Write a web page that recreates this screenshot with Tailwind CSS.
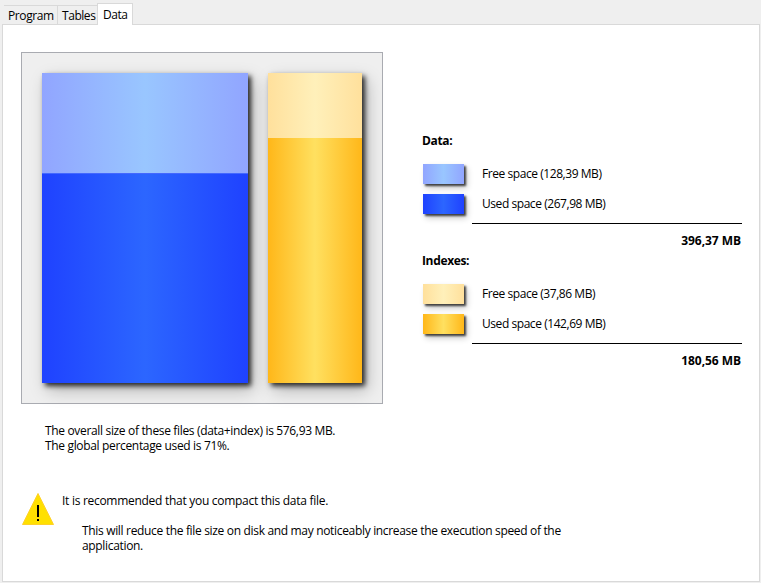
<!DOCTYPE html>
<html lang="en">
<head>
<meta charset="utf-8">
<title>Data</title>
<script src="https://cdn.jsdelivr.net/npm/@tailwindcss/browser@4"></script>
</head>
<body class="h-[583px] w-[761px] overflow-hidden bg-[#efefef] font-['Open_Sans','Noto_Sans',sans-serif] text-[12px] leading-[15px] tracking-[-0.3px] whitespace-nowrap text-black">
<div class="flex h-full flex-col pr-px pb-px pl-[2px]">
  <nav class="relative z-10 -mb-px flex h-[22px] mt-[3px] items-end pl-[2px]">
    <div class="mb-px h-[19px] w-[54px] border-t border-r border-[#d9d9d9] pt-[2px] pl-[4px] tracking-[-0.4px]">Program</div>
    <div class="mb-px h-[19px] w-[39px] border-t border-[#d9d9d9] pt-[2px] pl-[4px] tracking-[-0.45px]">Tables</div>
    <div class="h-[22px] w-[36px] border border-b-0 border-[#d9d9d9] bg-white pt-[3px] pl-[5px] tracking-[-0.5px]">Data</div>
  </nav>
  <main class="h-[558px] w-[758px] border border-[#d9d9d9] bg-white pt-[27px] pl-[18px]">
    <div class="flex">
      <div class="flex h-[352px] w-[362px] gap-[20px] border border-[#a9abb1] bg-[#efefef] pt-[20px] pl-[20px]">
        <div class="h-[310px] w-[206px] shadow-[3px_3px_5px_rgba(0,0,0,0.8),5px_7px_16px_rgba(0,0,0,0.25)]">
          <div class="h-[100px] bg-linear-to-r/srgb from-[#91a5ff] via-[#99c6ff] to-[#91a5ff]"></div>
          <div class="h-[210px] border-t border-[#4468ff] bg-linear-to-r/srgb from-[#1f42ff] via-[#2c66ff] to-[#1f42ff]"></div>
        </div>
        <div class="h-[310px] w-[94px] shadow-[3px_3px_5px_rgba(0,0,0,0.8),5px_7px_16px_rgba(0,0,0,0.25)]">
          <div class="h-[65px] bg-linear-to-r/srgb from-[#ffe09c] via-[#fff0ba] to-[#ffe09c]"></div>
          <div class="h-[245px] bg-linear-to-r/srgb from-[#ffb719] via-[#ffe060] to-[#ffb719]"></div>
        </div>
      </div>
      <div class="ml-[39px] w-[320px] pt-[81px] tracking-[-0.44px]">
        <section class="h-[120px]">
          <h2 class="font-bold tracking-[-0.35px]">Data:</h2>
          <div class="mt-[16px] flex h-[20px] items-center gap-[19px] pl-px">
            <div class="h-[20px] w-[41px] bg-linear-to-r/srgb from-[#91a5ff] via-[#99c6ff] to-[#91a5ff] shadow-[2px_2px_2px_rgba(0,0,0,0.7),3px_4px_6px_rgba(0,0,0,0.22)]"></div><span class="-ml-px pb-px">Free space (128,39 MB)</span>
          </div>
          <div class="mt-[10px] flex h-[20px] items-center gap-[19px] pl-px">
            <div class="h-[20px] w-[41px] bg-linear-to-r/srgb from-[#1f42ff] via-[#2c66ff] to-[#1f42ff] shadow-[2px_2px_2px_rgba(0,0,0,0.7),3px_4px_6px_rgba(0,0,0,0.22)]"></div><span class="-ml-px pb-px">Used space (267,98 MB)</span>
          </div>
          <div class="mt-[9px] ml-[50px] border-t border-black pt-[9px] pr-px text-right font-bold tracking-[-0.05px]">396,37 MB</div>
        </section>
        <section class="h-[120px]">
          <h2 class="font-bold tracking-[-0.35px]">Indexes:</h2>
          <div class="mt-[16px] flex h-[20px] items-center gap-[19px] pl-px">
            <div class="h-[20px] w-[41px] bg-linear-to-r/srgb from-[#ffe09c] via-[#fff0ba] to-[#ffe09c] shadow-[2px_2px_2px_rgba(0,0,0,0.7),3px_4px_6px_rgba(0,0,0,0.22)]"></div><span class="-ml-px pb-px">Free space (37,86 MB)</span>
          </div>
          <div class="mt-[10px] flex h-[20px] items-center gap-[19px] pl-px">
            <div class="h-[20px] w-[41px] bg-linear-to-r/srgb from-[#ffb719] via-[#ffe060] to-[#ffb719] shadow-[2px_2px_2px_rgba(0,0,0,0.7),3px_4px_6px_rgba(0,0,0,0.22)]"></div><span class="-ml-px pb-px">Used space (142,69 MB)</span>
          </div>
          <div class="mt-[9px] ml-[50px] border-t border-black pt-[9px] pr-px text-right font-bold tracking-[-0.05px]">180,56 MB</div>
        </section>
      </div>
    </div>
    <div class="mt-[19px] pl-[24px] tracking-[-0.335px]">
      <p>The overall size of these files (data+index) is 576,93 MB.<br>The global percentage used is 71%.</p>
    </div>
    <div class="mt-[40px] flex">
      <svg class="h-[32px] w-[34px] shrink-0" viewBox="0 0 34 32"><path d="M17 .5L32.5 31.5H1.500Z" fill="#ffe000" stroke="#ffd02a" stroke-width="1"/><path d="M16 12h2v12h-2zM16 26h2v2h-2z"/></svg>
      <div class="pl-[7px]">
        <p class="tracking-[-0.285px]">It is recommended that you compact this data file.</p>
        <p class="mt-[15px] pl-[20px] tracking-[-0.327px]">This will reduce the file size on disk and may noticeably increase the execution speed of the<br>application.</p>
      </div>
    </div>
  </main>
</div>
</body>
</html>
